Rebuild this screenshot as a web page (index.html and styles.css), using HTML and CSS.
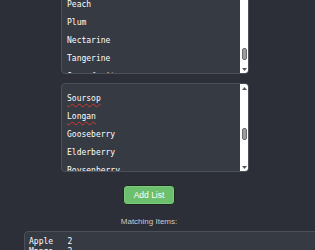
FILE: index.html
```html
<!DOCTYPE html>
<html lang="en">
<head>
<meta charset="utf-8">
<title>Fruit lists</title>
<link rel="stylesheet" href="styles.css">
</head>
<body>
<main class="page">
  <div class="ta ta-first">
    <div class="ta-text first-text">
      <div class="line">Peach</div>
      <div class="line">Plum</div>
      <div class="line">Nectarine</div>
      <div class="line">Tangerine</div>
      <div class="line">Grapefruit</div>
    </div>
    <div class="sb">
      <svg class="arrow up" width="5" height="4" viewBox="0 0 5 4"><path d="M2.5 0 L5 3 L0 3 Z" fill="#555"/></svg>
      <div class="thumb thumb-first"></div>
      <svg class="arrow down" width="5" height="4" viewBox="0 0 5 4"><path d="M0 1 L5 1 L2.5 4 Z" fill="#555"/></svg>
    </div>
  </div>

  <div class="ta ta-second">
    <div class="ta-text second-text">
      <div class="line"><span class="misspelled">Soursop</span></div>
      <div class="line"><span class="misspelled">Longan</span></div>
      <div class="line">Gooseberry</div>
      <div class="line">Elderberry</div>
      <div class="line">Boysenberry</div>
    </div>
    <div class="sb">
      <svg class="arrow up" width="5" height="4" viewBox="0 0 5 4"><path d="M2.5 0 L5 3 L0 3 Z" fill="#555"/></svg>
      <div class="thumb thumb-second"></div>
      <svg class="arrow down" width="5" height="4" viewBox="0 0 5 4"><path d="M0 1 L5 1 L2.5 4 Z" fill="#555"/></svg>
    </div>
  </div>

  <div class="actions">
    <button class="add-btn" type="button">Add List</button>
    <div class="label">Matching Items:</div>
  </div>

  <pre class="result">Apple	2
Mango	2</pre>
</main>
</body>
</html>
```

FILE: styles.css
```css
html, body {
  margin: 0;
  padding: 0;
  overflow: hidden;
  background: #2c2f37;
}

.page {
  display: flex;
  flex-direction: column;
  margin-top: -15px;
}

.ta {
  box-sizing: border-box;
  width: 188px;
  height: 89px;
  margin-left: 61px;
  border: 1px solid #4b505b;
  border-radius: 4px;
  background: #363a43;
  display: flex;
  overflow: hidden;
}

.ta-second {
  margin-top: 9px;
}

.ta-text {
  flex: 1;
  overflow: hidden;
  padding-left: 5px;
  font-family: "DejaVu Sans Mono", monospace;
  font-size: 8px;
  line-height: 18px;
  color: #ffffff;
}

.first-text {
  padding-top: 10px;
}

.second-text {
  padding-top: 6px;
}

.misspelled {
  text-decoration: underline wavy #d23a2a;
  text-decoration-thickness: 1px;
  text-underline-offset: 2px;
}

.sb {
  width: 8px;
  background: #ffffff;
  display: flex;
  flex-direction: column;
  align-items: center;
  position: relative;
}

.arrow {
  display: block;
  margin-top: 3px;
}

.arrow.down {
  margin-top: auto;
  margin-bottom: 2px;
}

.thumb {
  width: 3px;
  height: 10px;
  background: #9a9a9a;
  border: 1px solid #6d6d6d;
  border-radius: 2px;
}

.thumb-first {
  margin-top: 55px;
}

.thumb-second {
  margin-top: 37px;
}

.actions {
  width: 298px;
  display: flex;
  flex-direction: column;
  align-items: center;
  margin-top: 13px;
}

.add-btn {
  box-sizing: border-box;
  width: 52px;
  height: 20px;
  padding: 0;
  background: #6cbf6c;
  border: 1px solid #1c261e;
  border-radius: 4px;
  box-shadow: inset 0 0 0 1px #7ccd7c;
  color: #ffffff;
  font-family: "Liberation Sans", Arial, sans-serif;
  font-size: 8.5px;
}

.label {
  margin-top: 12px;
  font-family: "Liberation Sans", Arial, sans-serif;
  font-size: 8px;
  line-height: 10px;
  color: #c8cacd;
}

.result {
  box-sizing: border-box;
  width: 320px;
  margin: 4px 0 0 24px;
  padding: 5px 4px 4px;
  border: 1px solid #4b505b;
  border-radius: 4px;
  background: #363a43;
  color: #ffffff;
  font-family: "DejaVu Sans Mono", monospace;
  font-size: 8px;
  line-height: 10px;
  tab-size: 8;
}
```
